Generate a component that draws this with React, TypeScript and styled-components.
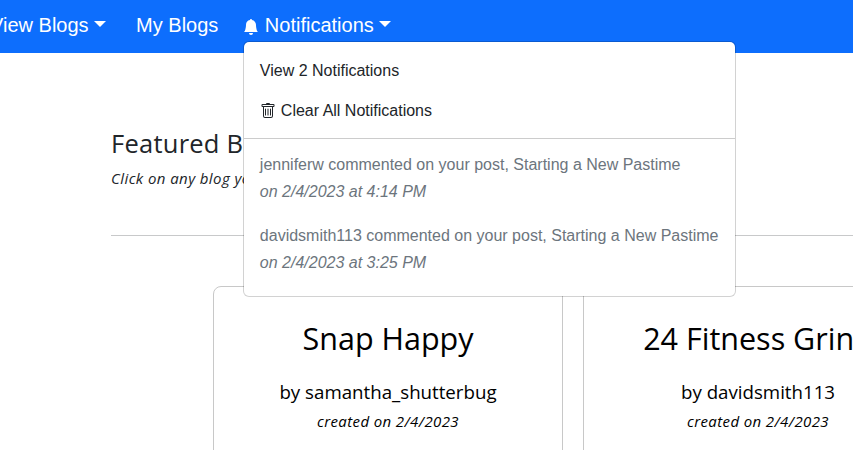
import React from 'react';
import styled, { createGlobalStyle } from 'styled-components';
import { BsBellFill, BsTrash } from 'react-icons/bs';

const GlobalStyle = createGlobalStyle`
  * { box-sizing: border-box; }
  body { margin: 0; overflow: hidden; background: #fff; color: #212529; }
  h2, h3, p { margin: 0; font-weight: 400; }
`;
const Page = styled.div`
  width: 853px;
  height: 450px;
  overflow: hidden;
  font-family: "Open Sans", "Noto Sans", sans-serif;
  white-space: nowrap;
`;
const Navbar = styled.nav`
  height: 53px;
  background: #0d6efd;
  color: #fff;
  font: 20px/50px "Liberation Sans", sans-serif;
  display: flex;
  align-items: flex-start;
`;
const NavItem = styled.div<{ $gap: number; $shift?: number }>`
  position: relative;
  display: flex;
  align-items: center;
  height: 50px;
  margin-left: ${p => p.$shift ?? 0}px;
  margin-right: ${p => p.$gap}px;
`;
const Caret = styled.i`
  margin: -3px 0 0 5px;
  border: 6px solid transparent;
  border-top-color: #fff;
  border-bottom: 0;
`;
const Bell = styled(BsBellFill)`
  width: 16px;
  height: 16px;
  margin: 4px 6px 0 0;
`;
const Menu = styled.div`
  position: absolute;
  z-index: 2;
  top: 41px;
  left: 0;
  width: 493px;
  height: 256px;
  padding: 17px 0 0;
  background: #fff;
  background-clip: padding-box;
  border: 1px solid rgba(0, 0, 0, 0.175);
  border-radius: 6px;
  color: #212529;
  font-size: 16px;
  line-height: 24px;
`;
const MenuItem = styled.div`
  display: flex;
  align-items: center;
  height: 24px;
  padding: 0 16px;
  margin-bottom: 16px;
`;
const Trash = styled(BsTrash)`
  width: 16px;
  height: 16px;
  margin-right: 5px;
`;
const Divider = styled.div`
  height: 1px;
  margin-top: -1px;
  background: #ccc;
`;
const Notice = styled.div`
  padding: 0 16px;
  margin: 12px 0 17px;
  color: #6c757d;
  line-height: 27px;
`;
const Main = styled.main`
  padding: 75px 0 0 111px;
`;
const Heading = styled.h2`
  font-size: 25.5px;
  line-height: 31px;
  letter-spacing: 0.25px;
`;
const Hint = styled.p`
  margin-top: 7px;
  font-size: 15px;
  line-height: 24px;
  letter-spacing: 0.42px;
  font-style: italic;
`;
const Rule = styled.div`
  height: 1px;
  margin-top: 45px;
  background: #c8c9ca;
`;
const Cards = styled.div`
  display: flex;
  gap: 20px;
  margin: 50px 0 0 102px;
`;
const Card = styled.article`
  flex: 0 0 350px;
  height: 200px;
  padding-top: 31px;
  border: 1px solid #c8c8c8;
  border-radius: 8px;
  color: #000;
  text-align: center;
`;
const Title = styled.h3`
  font-size: 30.5px;
  line-height: 40px;
`;
const Author = styled.p`
  margin-top: 20px;
  font-size: 18.7px;
  line-height: 28px;
`;
const Created = styled.p`
  font-size: 15px;
  line-height: 30px;
  letter-spacing: 0.38px;
  font-style: italic;
`;

const notices = [
  { text: 'jenniferw commented on your post, Starting a New Pastime', time: 'on 2/4/2023 at 4:14 PM' },
  { text: 'davidsmith113 commented on your post, Starting a New Pastime', time: 'on 2/4/2023 at 3:25 PM' },
];
const blogs = [
  { title: 'Snap Happy', author: 'samantha_shutterbug' },
  { title: '24 Fitness Grind', author: 'davidsmith113' },
];

export default function App() {
  return (
    <Page>
      <GlobalStyle />
      <Navbar>
        <NavItem $shift={-10} $gap={30.5}>View Blogs<Caret /></NavItem>
        <NavItem $gap={24.5}>My Blogs</NavItem>
        <NavItem $gap={0}>
          <Bell />Notifications<Caret />
          <Menu>
            <MenuItem>View 2 Notifications</MenuItem>
            <MenuItem><Trash />Clear All Notifications</MenuItem>
            <Divider />
            {notices.map(n => (
              <Notice key={n.text}><div>{n.text}</div><em>{n.time}</em></Notice>
            ))}
          </Menu>
        </NavItem>
      </Navbar>
      <Main>
        <Heading>Featured Blogs</Heading>
        <Hint>Click on any blog you would like to read!</Hint>
        <Rule />
        <Cards>
          {blogs.map(b => (
            <Card key={b.title}>
              <Title>{b.title}</Title>
              <Author>by {b.author}</Author>
              <Created>created on 2/4/2023</Created>
            </Card>
          ))}
        </Cards>
      </Main>
    </Page>
  );
}
